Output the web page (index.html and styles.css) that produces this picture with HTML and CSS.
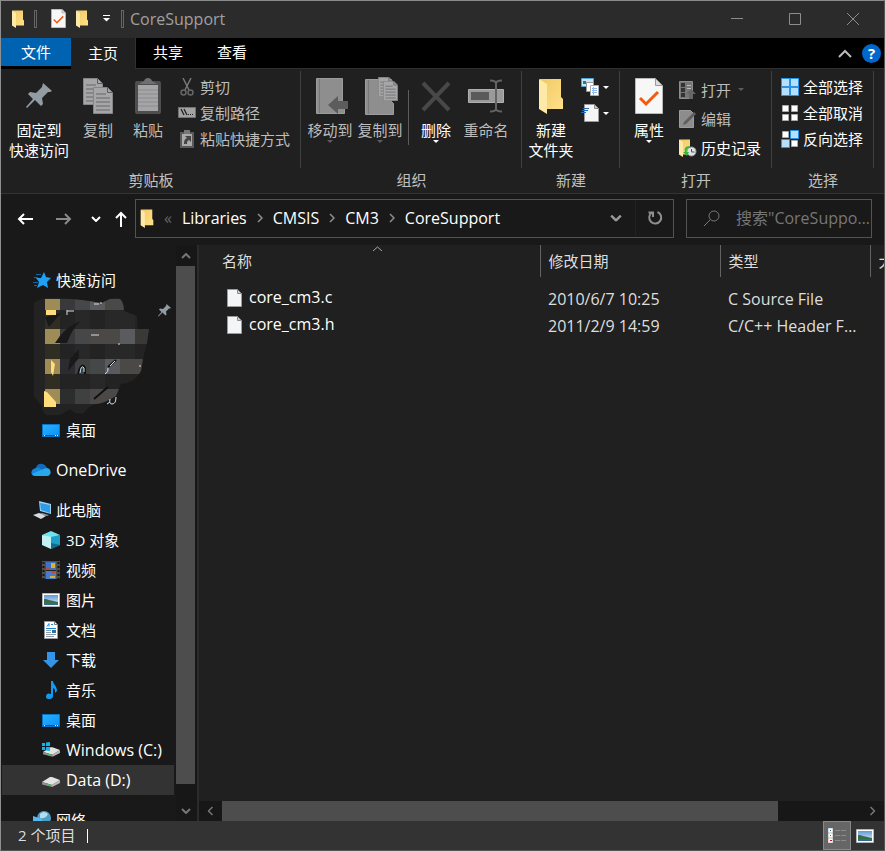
FILE: index.html
```html
<!DOCTYPE html>
<html lang="zh-CN">
<head>
  <meta charset="UTF-8">
  <meta name="viewport" content="width=device-width, initial-scale=1.0">
  <title>CoreSupport</title>
  <link rel="stylesheet" href="styles.css">
</head>
<body>
  <!-- shared icons -->
  <svg class="sprite" aria-hidden="true">
    <defs>
      <linearGradient id="g-folder" x1="0" y1="0" x2="1" y2="1"><stop offset="0" stop-color="#f0c963"/><stop offset="1" stop-color="#ffe08a"/></linearGradient>
      <linearGradient id="g-blue" x1="0" y1="0" x2="1" y2="1"><stop offset="0" stop-color="#29b1ff"/><stop offset="1" stop-color="#0a8ff5"/></linearGradient>
      <linearGradient id="g-sky" x1="0" y1="0" x2="0" y2="1"><stop offset="0" stop-color="#5f9ad8"/><stop offset="1" stop-color="#e4f1fa"/></linearGradient>
    </defs>
    <symbol id="folder" viewBox="0 0 24 36">
      <path d="M1 1h21v18l2 2v10H1z" fill="url(#g-folder)"/>
      <path d="M0 1l8 5v30l-8-5z" fill="#ffe9a6"/>
    </symbol>
    <symbol id="check-doc" viewBox="0 0 28 36">
      <path d="M.5.5h20l7 7v28H.5z" fill="#f7f7f7" stroke="#b9b9b9"/>
      <path d="M20.500 .5v7h7z" fill="#ddd" stroke="#999"/>
      <path d="M5 20l6 6 12-12" fill="none" stroke="#f4590c" stroke-width="3"/>
    </symbol>
    <symbol id="page" viewBox="0 0 15 18">
      <path d="M.5.5h10l4 4v13H.5z" fill="#f4f5f6" stroke="#9b9b9b"/>
      <path d="M10.500 .5v4h4z" fill="#cfcfcf" stroke="#8c8c8c"/>
    </symbol>
    <symbol id="pin" viewBox="0 0 26 26">
      <path d="M17 0l9 8-2 1-2 0-6 6 1 6-2 2-6-6-8 8-1-1 7-8-5-5 2-2 6 1 6-6z" fill="#939ca3"/>
    </symbol>
    <symbol id="desktop" viewBox="0 0 18 13">
      <path d="M.5.5h17v12H.5z" fill="url(#g-blue)" stroke="#0a76c8"/>
      <path d="M1 11.500h16" stroke="#0d568f"/><path d="M2 11.500h1M13 11.500h1M15 11.500h1" stroke="#fff"/>
    </symbol>
    <symbol id="picture" viewBox="0 0 18 14">
      <path d="M.5.5h17v13H.5z" fill="#fff" stroke="#b5b5b5"/>
      <path d="M2 2h14v10H2z" fill="url(#g-sky)"/>
      <path d="M2 6c4 0 7 2 14 3v1H2z" fill="#3d6b4a"/><path d="M2 10h14v2H2z" fill="#2f6c94"/>
    </symbol>
    <symbol id="drive" viewBox="0 0 18 10">
      <path d="M0 5l8-5h2l8 3-8 5z" fill="#e3e3e3"/>
      <path d="M0 5l10 3v2L0 7.500z" fill="#8f8f8f"/><path d="M10 8l8-5v3l-8 4z" fill="#b9b9b9"/>
      <path d="M5 7.500l2 .6" stroke="#29d646" stroke-width="1.500"/>
    </symbol>
    <symbol id="doc-lines" viewBox="0 0 20 27">
      <path d="M.5.5h14l5 5v21H.5z" fill="#a6a6a8" stroke="#858585"/>
      <path d="M14.500 .5v5h5" fill="none" stroke="#5d5d5d"/>
      <path d="M3 7h10M3 11h14M3 15h14M3 19h14M3 23h14" stroke="#666" stroke-width="1"/>
    </symbol>
    <symbol id="down" viewBox="0 0 6 3"><path d="M0 0h6L3 3z" fill="currentColor"/></symbol>
    <symbol id="chev" viewBox="0 0 10 6"><path d="M1 1l4 4 4-4" fill="none" stroke="currentColor" stroke-width="2"/></symbol>
    <symbol id="chev-r" viewBox="0 0 6 10"><path d="M1 1l4 4-4 4" fill="none" stroke="currentColor" stroke-width="1.500"/></symbol>
  </svg>

  <div class="window">
    <header class="title-bar">
      <svg class="ic-folder" width="14" height="18"><use href="#folder"/></svg>
      <span class="sep"></span>
      <button class="quick" aria-label="属性"><svg width="15" height="19"><use href="#check-doc"/></svg></button>
      <button class="quick" aria-label="新建文件夹"><svg width="14" height="18"><use href="#folder"/></svg></button>
      <button class="quick" aria-label="自定义快速访问工具栏"><svg width="7" height="7"><path d="M0 .5h7" stroke="#fff"/><path d="M0 3h7L3.500 6.500z" fill="#fff"/></svg></button>
      <span class="sep last"></span>
      <h1>CoreSupport</h1>
      <div class="window-buttons">
        <button aria-label="最小化"><svg width="12" height="12"><path d="M0 5.500h12" stroke="#8d8d8d"/></svg></button>
        <button aria-label="最大化"><svg width="12" height="12"><path d="M.5.5h11v11H.5z" fill="none" stroke="#8d8d8d"/></svg></button>
        <button aria-label="关闭"><svg width="12" height="12"><path d="M0 0l12 12M12 0L0 12" stroke="#8d8d8d"/></svg></button>
      </div>
    </header>

    <nav class="tabs">
      <button class="file">文件</button>
      <button class="active">主页</button>
      <button>共享</button>
      <button>查看</button>
      <div class="tabs-end">
        <button aria-label="折叠功能区"><svg width="14" height="9"><path d="M1 8l6-6 6 6" fill="none" stroke="#bbb" stroke-width="2"/></svg></button>
        <button class="help" aria-label="帮助">?</button>
      </div>
    </nav>

    <section class="ribbon">
      <div class="group">
        <div class="group-body">
          <button class="big wide"><span class="big-icon"><svg width="26" height="26"><use href="#pin"/></svg></span>固定到<br>快速访问</button>
          <button class="big off"><span class="big-icon"><svg width="30" height="36"><use href="#doc-lines" width="20" height="27"/><use href="#doc-lines" x="10" y="9" width="20" height="27"/></svg></span>复制</button>
          <button class="big off"><span class="big-icon"><svg width="26" height="36" viewBox="0 0 26 36">
            <rect y="3" width="26" height="33" rx="2" fill="#4e4e4e"/><path d="M3 7h20v26H3z" fill="#a5a5a7"/>
            <path d="M4 6l5-3c1-4 7-4 8 0l5 3z" fill="#6f6f6f"/><path d="M3 12h20M3 16h20M3 20h20M3 24h20M3 28h20" stroke="#8b8b8d"/></svg></span>粘贴</button>
          <div class="small-list">
            <button class="small off"><svg width="18" height="18" viewBox="0 0 18 18"><path d="M5 0l6 12M13 0L7 12" stroke="#777" stroke-width="1.500"/><circle cx="5.500" cy="14.500" r="2.500" fill="none" stroke="#666" stroke-width="1.500"/><circle cx="12.500" cy="14.500" r="2.500" fill="none" stroke="#666" stroke-width="1.500"/></svg>剪切</button>
            <button class="small off"><svg width="18" height="18" viewBox="0 0 18 18"><path d="M.5 3.500h17v10H.5z" fill="#a2a2a2" stroke="#737373"/><path d="M3 5l3 6M6 5l3 6" stroke="#222" stroke-width="1.300"/><path d="M10 10.500h1M12 10.500h1M14 10.500h1" stroke="#222"/></svg>复制路径</button>
            <button class="small off"><svg width="18" height="18" viewBox="0 0 18 18"><path d="M2 2h14v16H2z" fill="#595959"/><path d="M4 4h10v12H4z" fill="#aaa"/><path d="M6 0h6v4H6z" fill="#777"/><path d="M6 14c0-4 1-5 3-6L7 6h6v6l-2-2c-2 1-2 2-2 4z" fill="#444"/></svg>粘贴快捷方式</button>
          </div>
        </div>
        <h2>剪贴板</h2>
      </div>

      <div class="group">
        <div class="group-body">
          <button class="big off"><span class="big-icon"><svg width="36" height="36" viewBox="0 0 36 36"><path d="M4.500 .5h26v23l2 2v10h-28z" fill="#8e8e8e" stroke="#9c9c9c"/><path d="M7.500 1v34" stroke="#777"/><path d="M16 27l10-9v5h10v8H26v5z" fill="#5c5c5c"/></svg></span>移动到<svg class="drop" width="6" height="3"><use href="#down"/></svg></button>
          <button class="big off"><span class="big-icon"><svg width="38" height="38" viewBox="0 0 38 38"><path d="M4.500 2.500h26v22l2 2v11h-28z" fill="#8e8e8e" stroke="#9c9c9c"/><path d="M7.500 3v34" stroke="#777"/><use href="#doc-lines" x="17" y="0" width="15" height="20"/><use href="#doc-lines" x="22" y="4" width="15" height="20"/></svg></span>复制到<svg class="drop" width="6" height="3"><use href="#down"/></svg></button>
          <span class="divider"></span>
          <button class="big"><span class="big-icon"><svg width="30" height="36" viewBox="0 0 30 36"><path d="M2 5l26 27M28 5L2 32" stroke="#484848" stroke-width="4"/></svg></span>删除<svg class="drop" width="6" height="3"><use href="#down"/></svg></button>
          <button class="big off"><span class="big-icon"><svg width="36" height="36" viewBox="0 0 36 36"><path d="M.5 11.500h35v13H.5z" fill="#9a9a9a" stroke="#b0b0b0"/><path d="M3 14h18v8H3z" fill="#5a5a5a"/><path d="M28 4v28M22 2.500c4 0 6 1 6 3 0-2 2-3 6-3M22 33.500c4 0 6-1 6-3 0 2 2 3 6 3" fill="none" stroke="#636363" stroke-width="2"/></svg></span>重命名</button>
        </div>
        <h2>组织</h2>
      </div>

      <div class="group">
        <div class="group-body">
          <button class="big"><span class="big-icon"><svg width="24" height="36"><use href="#folder"/></svg></span>新建<br>文件夹</button>
          <div class="small-list">
            <button class="small tight" aria-label="新建项目"><svg width="18" height="18" viewBox="0 0 18 18"><path d="M.5.5h12v8H.5z" fill="#c8e4f7" stroke="#4ba3dc"/><path d="M2 3h3v3H2z" fill="#337a6c"/><path d="M5.500 4.500h7v9h-7z" fill="#fff" stroke="#999"/><path d="M9.500 7.500h8v10h-8z" fill="#fff" stroke="#aaa"/><path d="M11 10.500h5M11 12.500h5M11 14.500h5" stroke="#8bb8e8"/><path d="M12.500 9v8" stroke="#f5a090"/></svg><svg width="6" height="3"><use href="#down"/></svg></button>
            <button class="small tight" aria-label="轻松访问"><svg width="18" height="18"><use href="#page" x="3" width="15" height="18"/><path d="M2 4.500h6M1 6.500h6M0 8.500h5" stroke="#1e6cb8"/></svg><svg width="6" height="3"><use href="#down"/></svg></button>
          </div>
        </div>
        <h2>新建</h2>
      </div>

      <div class="group">
        <div class="group-body">
          <button class="big"><span class="big-icon"><svg width="28" height="36"><use href="#check-doc"/></svg></span>属性<svg class="drop" width="6" height="3"><use href="#down"/></svg></button>
          <div class="small-list loose">
            <button class="small off"><svg width="18" height="18" viewBox="0 0 18 18"><path d="M.5.5h13v17H.5z" fill="#777" stroke="#8d8d8d"/><path d="M2 2h4v4H2zM2 7h4v4H2zM2 12h4v4H2z" fill="#333"/><path d="M8 4.500h4M8 7.500h4" stroke="#bbb"/><path d="M12 8l5 5h-3v5h-4v-5H7z" fill="#666"/></svg>打开<svg class="drop-side" width="6" height="3"><use href="#down"/></svg></button>
            <button class="small off"><svg width="18" height="18" viewBox="0 0 18 18"><path d="M.5.500h11l3 3v14H.5z" fill="#8d8d8d" stroke="#9c9c9c"/><path d="M4 15l1-3L15 2l2 2L7 14z" fill="#5e5e5e"/></svg>编辑</button>
            <button class="small"><svg width="18" height="18" viewBox="0 0 18 18"><use href="#folder" width="12" height="18"/><circle cx="12.500" cy="12.500" r="4.500" fill="#dfe3e4" stroke="#999"/><path d="M12.500 10v3h3" fill="none" stroke="#555"/><path d="M11 7c-5 0-6 3-5 6H4l4 4 2-4H8c-1-2 0-4 3-4z" fill="#35b83a"/></svg>历史记录</button>
          </div>
        </div>
        <h2>打开</h2>
      </div>

      <div class="group">
        <div class="group-body">
          <div class="small-list">
            <button class="small"><svg width="18" height="18" viewBox="0 0 18 18"><path d="M0 0h18v18H0z" fill="#2a92e4"/><path d="M1 1h7v7H1zM10 1h7v7h-7zM1 10h7v7H1zM10 10h7v7h-7z" fill="#b5dffc"/></svg>全部选择</button>
            <button class="small"><svg width="18" height="18" viewBox="0 0 18 18"><path d="M1.500 1.500h6v6h-6zM10.500 1.500h6v6h-6zM1.500 10.500h6v6h-6zM10.500 10.500h6v6h-6z" fill="#fff" stroke="#a9a9a9"/></svg>全部取消</button>
            <button class="small"><svg width="18" height="18" viewBox="0 0 18 18"><path d="M1.500 1.500h6v6h-6zM10.500 10.500h6v6h-6z" fill="#fff" stroke="#a9a9a9"/><path d="M9.500 .5h8v8h-8zM.5 9.500h8v8h-8z" fill="#b5dffc" stroke="#2a92e4"/></svg>反向选择</button>
          </div>
        </div>
        <h2>选择</h2>
      </div>
    </section>

    <section class="address-row">
      <div class="history">
        <button aria-label="后退"><svg width="16" height="12"><path d="M16 6H2M7 1L2 6l5 5" fill="none" stroke="#fff" stroke-width="2"/></svg></button>
        <button aria-label="前进"><svg width="16" height="12"><path d="M0 6h14M9 1l5 5-5 5" fill="none" stroke="#8a8a8a" stroke-width="2"/></svg></button>
        <button class="slim" aria-label="最近浏览的位置"><svg width="10" height="6"><use href="#chev"/></svg></button>
        <button class="slim" aria-label="向上"><svg width="12" height="16"><path d="M6 16V2M1 7l5-5 5 5" fill="none" stroke="#fff" stroke-width="2"/></svg></button>
      </div>
      <div class="address">
        <svg width="14" height="19"><use href="#folder"/></svg>
        <span class="more">«</span>
        <a href="#">Libraries</a><svg width="6" height="10"><use href="#chev-r"/></svg>
        <a href="#">CMSIS</a><svg width="6" height="10"><use href="#chev-r"/></svg>
        <a href="#">CM3</a><svg width="6" height="10"><use href="#chev-r"/></svg>
        <a href="#">CoreSupport</a>
        <div class="address-end">
          <button aria-label="以前的位置"><svg width="12" height="8" viewBox="0 0 10 6"><use href="#chev"/></svg></button>
          <button class="refresh" aria-label="刷新"><svg width="16" height="16"><path d="M10.500 2A6 6 0 1 1 5 2.500M1.500 2.500H6V7" fill="none" stroke="#8f8f8f" stroke-width="2"/></svg></button>
        </div>
      </div>
      <label class="search">
        <svg width="16" height="16"><circle cx="10" cy="6" r="5" fill="none" stroke="#777"/><path d="M6.500 9.500L0 16" stroke="#777"/></svg>
        <input type="text" aria-label="搜索" placeholder="搜索&quot;CoreSupport&quot;">
      </label>
    </section>

    <main>
      <aside>
        <div class="tree">
          <a href="#" class="top"><svg width="18" height="16" viewBox="0 0 18 16"><path d="M11 0l2 5 5 1-4 4 1 6-5-3-6 3 2-6-3-4h5z" fill="#20a0f5"/><path d="M3 2.500h5M1 5.500h4M0 10.500h5M1 13.500h3" stroke="#1069a8"/></svg>快速访问</a>
          <div class="pinned">
            <!-- pixelated rows -->
            <svg width="120" height="120" viewBox="0 0 120 120">
              <defs><clipPath id="blot"><path d="M0 8q6-6 26-5l22 2 20 3q10-6 16-5 6 2 6 13l13 5 1 13h11l-2 14-4 16-2 12q-6 12-20 13l-5 12q-13 8-20 8-8 2-12 9-8 2-14-4-10 7-18 8-10-1-10-11l-12-14-5-28 3-5-4-27z"/></clipPath></defs>
              <g clip-path="url(#blot)">
                <path d="M0 0h120v120H0z" fill="#232323"/>
                <path d="M11 4h15v11H11zM11 34h15v15H11zM11 64h15v15H11zM11 94h15v15H11z" fill="#9e8b55"/>
                <path d="M11 15h15v19H11zM11 49h15v15H11zM11 79h15v15H11z" fill="#302d23"/>
                <path d="M26 4h15v11H26zM26 34h15v15H26z" fill="#39393b"/><path d="M26 64h15v15H26z" fill="#2b2b30"/><path d="M26 94h15v15H26z" fill="#2c2e2e"/>
                <path d="M41 4h15v11H41zM41 34h15v15H41zM56 64h15v15H56z" fill="#454749"/>
                <path d="M41 64h15v15H41zM41 94h15v15H41z" fill="#3e4140"/>
                <path d="M56 4h15v11H56zM86 34h15v15H86zM71 64h15v15H71z" fill="#5a5b5e"/>
                <path d="M71 4h20v11H71zM56 34h30v15H56zM86 64h30v15H86zM56 94h30v15H56z" fill="#4b4948"/>
                <path d="M101 34h15v15h-15z" fill="#3b3938"/>
                <path d="M41 15h15v19H41zM71 15h30v19H71zM41 49h15v15H41zM71 49h30v15H71zM56 79h15v15H56z" fill="#282828"/>
                <path d="M21 48q10-17 26-22-8 6-14 22zM34 76l2-12 9-10v9zM11 22l4 10 12-14z" fill="#191919"/>
              </g>
              <path d="M12 15h10v5H12zM17 65l4 4-2 12-2-4zM10 96l3 1 9 10v5H10z" fill="#ffdd7c"/>
              <path d="M33 16h7M33 15v5M60 9h5M66 8h2M57 40h8M105 71h2M84 49h2" stroke="#ddd"/>
              <path d="M44 79l2-6q3-5 5 0v6M74 72l8-7M60 104l14-12" fill="none" stroke="#101010" stroke-width="2"/>
              <path d="M46 78q1-9 4-5v4M76 71l5-5M71 79q4-2 3-6M73 109l3-2M76 104q-1 5 2 5 4 0 4-7" fill="none" stroke="#c9e5f5"/>
            </svg>
            <svg class="pin" width="13" height="13"><use href="#pin"/></svg>
          </div>
          <a href="#"><svg width="18" height="13"><use href="#desktop"/></svg>桌面</a>
          <a href="#" class="top gap latin"><svg width="20" height="14" viewBox="0 0 20 14"><path d="M5 5c1-5 8-6 11 0L6 12z" fill="#0f6cbd"/><path d="M5 5c2-1 4 0 6 2l-7 6c-5 0-5-7 1-8z" fill="#1685dd"/><path d="M10 7l5-2c6 0 6 8 1 8H5c-2 0-3-1-4-2z" fill="#28a8ea"/></svg>OneDrive</a>
          <a href="#" class="top gap"><svg width="18" height="18" viewBox="0 0 18 18"><path d="M6 0l12 3v10L7 10z" fill="#9ad2f5"/><path d="M7 2l10 2v8L8 9z" fill="#2f9cea"/><path d="M9 12l7 2-2 1-8-2z" fill="#8e969c"/><path d="M0 14l6-2 7 3-5 3z" fill="#d6dce0"/></svg>此电脑</a>
          <a href="#"><svg width="18" height="18" viewBox="0 0 18 18"><path d="M9 0l9 4-9 4-9-4z" fill="#6fe4ee"/><path d="M0 4l9 2v12l-9-4z" fill="#c3f0f2"/><path d="M9 6l9-2v10l-9 4z" fill="#1d9fc6"/><path d="M9 12l9 2-9 4z" fill="#15698d"/></svg>3D 对象</a>
          <a href="#"><svg width="18" height="18" viewBox="0 0 18 18"><path d="M0 0h18v18H0z" fill="#4f4f4f"/><path d="M4 1h10v8H4z" fill="#3f71c4"/><path d="M4 10h10v8H4z" fill="#467bcf"/><path d="M9 2h4v5H9zM8 15h5v2H8z" fill="#d6b22e"/><path d="M4 7h4v2H4zM10 10h3v2h-3z" fill="#c24532"/><path d="M4 9.500h10" stroke="#222"/><path d="M1.500 1v17M16.500 1v17" stroke="#151515" stroke-width="2" stroke-dasharray="2 2"/></svg>视频</a>
          <a href="#"><svg width="18" height="14"><use href="#picture"/></svg>图片</a>
          <a href="#"><svg width="18" height="18" viewBox="0 0 18 18"><path d="M2.500 .5h10l3 3v14h-13z" fill="#fff" stroke="#999"/><path d="M12.500 .5v3h3" fill="none" stroke="#777"/><path d="M5 5.500l2-3v3M9 3.500h2M4 7.500h10" stroke="#1788dd" fill="none"/><path d="M4 9.500h5M4 11.500h5M4 13.500h10M4 15.500h8" stroke="#8a9bab"/><path d="M10 9h4v3h-4z" fill="#2b7398"/></svg>文档</a>
          <a href="#"><svg width="18" height="16" viewBox="0 0 18 16"><path d="M5 0h8v8h4l-8 8-8-8h4z" fill="#3394e8"/></svg>下载</a>
          <a href="#"><svg width="18" height="18" viewBox="0 0 18 18"><path d="M9 0h2c0 3 4 5 4 10l-2 2c0-3 0-4-2-5v8c0 4-7 4-7 1 0-4 3-4 5-3z" fill="#0f9bf2"/></svg>音乐</a>
          <a href="#"><svg width="18" height="13"><use href="#desktop"/></svg>桌面</a>
          <a href="#" class="latin"><svg width="18" height="16" viewBox="0 0 18 16"><use href="#drive" y="5" x="1" width="17" height="10"/><path d="M0 1h3v3H0zM4 .5l4-.5v4H4zM0 5h3v3H0zM4 5h4v4l-4-.5z" fill="#12b2ee"/></svg>Windows (C:)</a>
          <a href="#" class="selected latin"><svg width="18" height="16"><use href="#drive" y="5" width="18" height="10"/></svg>Data (D:)</a>
          <a href="#" class="top gap"><svg width="18" height="18" viewBox="0 0 18 18"><circle cx="11" cy="7" r="7" fill="#4d9fc8"/><path d="M7 3q4-4 8 0-2 5-8 4z" fill="#b5deed"/><path d="M0 5l9 3v8l-9-3z" fill="#58b7f5"/></svg>网络</a>
        </div>
        <div class="vscroll">
          <button aria-label="向上滚动"><svg class="flip" width="10" height="6"><use href="#chev"/></svg></button>
          <span class="thumb"></span>
          <button class="end" aria-label="向下滚动"><svg width="10" height="6"><use href="#chev"/></svg></button>
        </div>
      </aside>

      <section class="files">
        <div class="list">
          <table>
            <colgroup><col><col class="c-date"><col class="c-type"><col class="c-size"></colgroup>
            <thead>
              <tr><th>名称<svg class="sort" width="9" height="5"><path d="M0 5l4.500-4L9 5" fill="none" stroke="#aaa"/></svg></th><th>修改日期</th><th>类型</th><th>大小</th></tr>
            </thead>
            <tbody>
              <tr><td><svg width="15" height="18"><use href="#page"/></svg>core_cm3.c</td><td>2010/6/7 10:25</td><td>C Source File</td><td></td></tr>
              <tr><td><svg width="15" height="18"><use href="#page"/></svg>core_cm3.h</td><td>2011/2/9 14:59</td><td>C/C++ Header File</td><td></td></tr>
            </tbody>
          </table>
        </div>
        <div class="hscroll">
          <button aria-label="向左滚动"><svg class="flip" width="7" height="10" viewBox="0 0 6 10"><use href="#chev-r"/></svg></button>
          <span class="track"><span class="thumb"></span></span>
          <button aria-label="向右滚动"><svg width="7" height="10" viewBox="0 0 6 10"><use href="#chev-r"/></svg></button>
        </div>
      </section>
    </main>

    <footer>
      <span class="count">2 个项目</span>
      <div class="views">
        <button class="on" aria-label="详细信息"><svg width="18" height="18" viewBox="0 0 18 18"><path d="M.5 1.500h4v4h-4zM.5 6.500h4v4h-4zM.5 11.500h4v4h-4z" fill="#fff" stroke="#ddd"/><path d="M2 3h1v1H2z" fill="#158"/><path d="M2 8h1v1H2z" fill="#b52"/><path d="M2 13h2v1H2z" fill="#c11"/><path d="M7 3.500h5M13 3.500h5M7 8.500h5M13 8.500h5M7 13.500h5M13 13.500h5" stroke="#8b8b8b"/></svg></button>
        <button aria-label="大缩略图"><svg width="18" height="14"><use href="#picture"/></svg></button>
      </div>
    </footer>
  </div>
</body>
</html>
```

FILE: styles.css
```css
* {
  box-sizing: border-box;
}
body {
  margin: 0;
  background: #191919;
  color: #fff;
  font-family: "Open Sans", "Noto Sans CJK SC", sans-serif;
  font-size: 15px;
  line-height: 20px;
}
button, input {
  font: inherit;
  color: inherit;
  background: none;
  border: none;
  padding: 0;
  margin: 0;
}
button {
  display: flex;
  align-items: center;
  justify-content: center;
}
a {
  color: inherit;
  text-decoration: none;
}
svg {
  flex: none;
}
h1, h2 {
  margin: 0;
  font-size: 15px;
  font-weight: normal;
}
.sprite {
  position: absolute;
  width: 0;
  height: 0;
}
.flip {
  transform: rotate(180deg);
}
.window {
  display: flex;
  flex-direction: column;
  height: 100vh;
  border: 1px solid #555;
  border-top-color: #8a8a8a;
  border-left-color: #8f8f8f;
}

/* title bar */
.title-bar {
  display: flex;
  align-items: center;
  height: 37px;
  padding: 0 2px 2px 10px;
  background: #2b2b2b;
}
.title-bar h1 {
  color: #a0a0a0;
  font-size: 16px;
}
.sep {
  width: 3px;
  height: 18px;
  margin: 0 12px 0 9px;
  border: 1px solid #666;
}
.sep.last {
  margin: 0 6px 0 6px;
}
.quick {
  width: 18px;
  margin-right: 6px;
}
.quick + .quick + .quick {
  margin-right: 0;
}
.window-buttons {
  display: flex;
  align-self: stretch;
  margin-left: auto;
}
.window-buttons button {
  width: 58px;
}

/* ribbon tabs */
.tabs {
  display: flex;
  height: 31px;
  background: #000;
}
.tabs > button {
  padding: 0 17px 2px;
  border: 1px solid #303030;
  border-width: 0 0 1px;
}
.tabs .file {
  height: 28px;
  padding: 0 20px;
  background: #0063b1;
  border: none;
}
.tabs .active {
  background: #202020;
  border-width: 0 1px 0 0;
}
.tabs-end {
  display: flex;
  flex: 1;
  align-items: center;
  justify-content: flex-end;
  gap: 10px;
  padding-right: 3px;
  border-bottom: 1px solid #303030;
}
.help {
  width: 19px;
  height: 19px;
  border-radius: 50%;
  background: #0067cc;
  font-weight: bold;
}

/* ribbon */
.ribbon {
  display: flex;
  height: 125px;
  padding-top: 2px;
  background: #202020;
  border-bottom: 1px solid #333;
}
.group {
  display: flex;
  flex-direction: column;
}
.group-body {
  display: flex;
  flex: 1;
  padding: 0 10px 0 4px;
  border-right: 1px solid #3f3f3f;
}
.group h2 {
  height: 25px;
  color: #c0c0c0;
  text-align: center;
  line-height: 24px;
}
.big {
  flex-direction: column;
  justify-content: flex-start;
  width: 50px;
  padding-top: 7px;
  white-space: nowrap;
}
.big.wide {
  width: 68px;
}
.big-icon {
  display: flex;
  align-items: center;
  justify-content: center;
  height: 36px;
  margin-bottom: 6px;
}
.off {
  color: #bdbdbd;
}
.off .drop, .off .drop-side {
  color: #5c5c5c;
}
.drop-side {
  margin-left: 3px;
}
.divider {
  width: 1px;
  height: 55px;
  margin: 19px 2px 0 3px;
  background: #5c5c5c;
}
.small-list {
  display: flex;
  flex-direction: column;
  padding: 3px 0 0 5px;
}
.small {
  justify-content: flex-start;
  gap: 4px;
  height: 26px;
}
.loose {
  padding-top: 4px;
}
.loose .small {
  height: 29px;
}

/* address row */
.address-row {
  display: flex;
  padding: 5px 12px 7px 4px;
  font-size: 16px;
}
.history {
  display: flex;
  margin-right: 2px;
}
.history button {
  width: 39px;
}
.history .slim {
  width: 25px;
}
.address, .search {
  display: flex;
  align-items: center;
  height: 39px;
  padding-bottom: 1px;
  border: 1px solid #535353;
}
.address {
  flex: 1;
  padding-left: 4px;
}
.address > svg {
  color: #8f8f8f;
}
.address a {
  margin: 0 10px;
}
.more {
  margin-left: 10px;
  color: #666;
}
.address-end {
  display: flex;
  align-self: stretch;
  margin-left: auto;
  color: #999;
}
.address-end button {
  width: 38px;
}
.address-end .refresh {
  border-left: 1px solid #222;
}
.search {
  gap: 16px;
  width: 186px;
  margin-left: 12px;
  padding-left: 17px;
}
.search input {
  flex: 1;
  min-width: 0;
  text-overflow: ellipsis;
}
.search input::placeholder {
  color: #767676;
}

/* content */
main {
  display: flex;
  flex: 1;
  min-height: 0;
}
aside {
  display: flex;
  width: 198px;
  border-right: 2px solid #2b2b2b;
}
.tree {
  flex: 1;
  overflow: hidden;
  padding: 20px 2px 0 1px;
}
.tree a {
  display: flex;
  align-items: center;
  gap: 6px;
  height: 30px;
  padding-left: 40px;
}
.tree .top {
  padding-left: 31px;
  gap: 5px;
}
.tree .latin {
  font-size: 16px;
}
.tree .top.latin {
  padding-left: 29px;
}
.tree .gap {
  margin-top: 10px;
}
.tree .selected {
  background: #333;
}
.pinned {
  display: flex;
  height: 120px;
  padding-left: 32px;
}
.pin {
  margin: 9px 0 0 4px;
}
.vscroll {
  display: flex;
  flex-direction: column;
  width: 21px;
  padding-right: 2px;
  background: #171717;
  color: #777;
}
.vscroll button {
  height: 21px;
}
.vscroll .end {
  margin-top: auto;
}
.vscroll .thumb {
  flex: 0 0 90%;
  background: #4d4d4d;
}
.files {
  display: flex;
  flex: 1;
  flex-direction: column;
  min-width: 0;
  background: #202020;
}
.list {
  flex: 1;
  overflow: hidden;
}
table {
  width: 100%;
  border-collapse: collapse;
  table-layout: fixed;
  color: #dedede;
}
.c-date {
  width: 180px;
}
.c-type {
  width: 150px;
}
.c-size {
  width: 14px;
}
th, td {
  overflow: hidden;
  padding: 0 0 0 8px;
  text-align: left;
  font-weight: normal;
  text-overflow: ellipsis;
  white-space: nowrap;
}
th {
  position: relative;
  height: 32px;
  border-right: 1px solid #636363;
}
th:last-child {
  border: none;
  text-overflow: clip;
}
th:first-child {
  padding-left: 23px;
}
.sort {
  position: absolute;
  top: 1px;
  left: 51%;
}
tbody::before {
  content: "";
  display: block;
  height: 8px;
}
td {
  height: 27px;
  padding-right: 10px;
  font-size: 16px;
}
td:first-child {
  padding-left: 28px;
  color: #fff;
}
td svg {
  margin: 0 7px 3px 0;
  vertical-align: middle;
}
.hscroll {
  display: flex;
  height: 20px;
  background: #171717;
  color: #777;
}
.hscroll button {
  width: 23px;
}
.track {
  display: flex;
  flex: 1;
}
.hscroll .thumb {
  width: 87%;
  background: #4d4d4d;
}

/* status bar */
footer {
  display: flex;
  align-items: center;
  height: 29px;
  padding: 0 5px 0 17px;
  background: #333;
}
.count {
  padding: 0 12px 1px 0;
  border-right: 1px solid #fff;
  color: #dedede;
  line-height: 13px;
}
.views {
  display: flex;
  align-self: stretch;
  margin-left: auto;
}
.views button {
  width: 28px;
}
.views .on {
  background: #666;
  border: 1px solid #888;
}
```
